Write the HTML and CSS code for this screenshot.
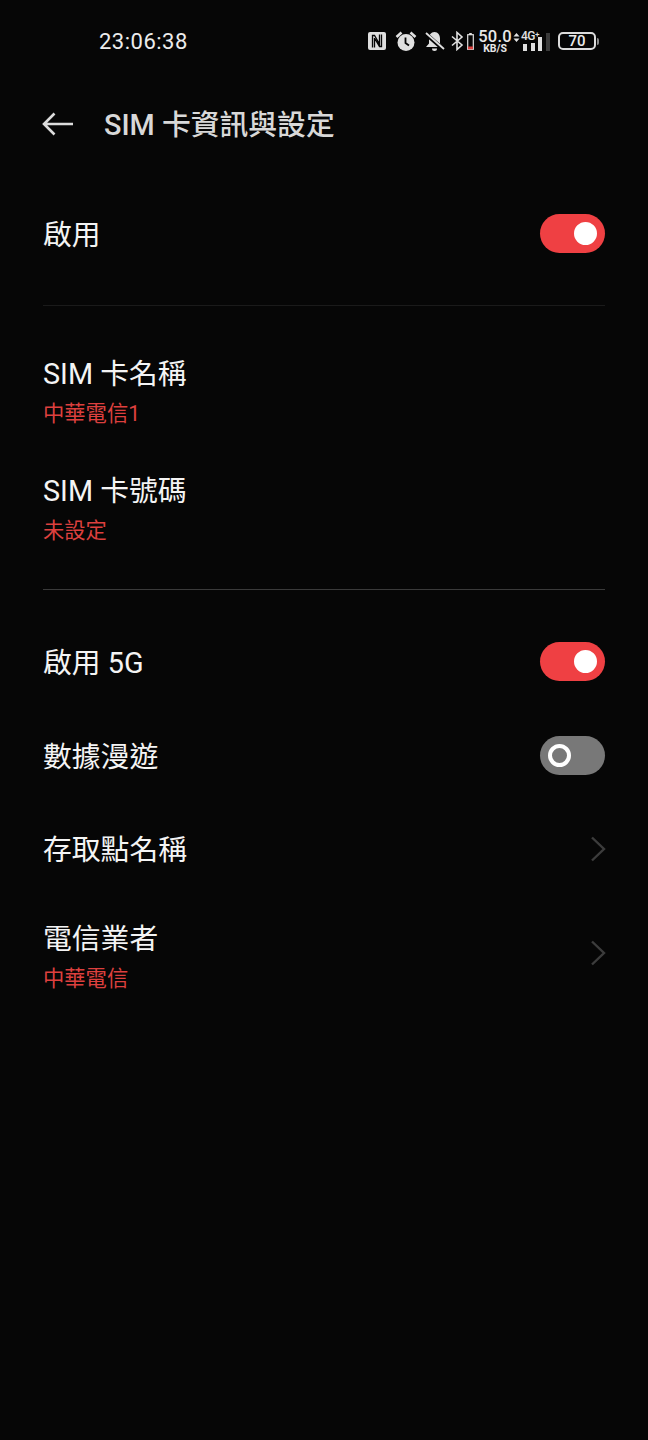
FILE: index.html
```html
<!DOCTYPE html>
<html lang="zh-Hant">
<head>
  <meta charset="UTF-8">
  <meta name="viewport" content="width=device-width, initial-scale=1.0">
  <title>SIM 卡資訊與設定</title>
  <link rel="stylesheet" href="styles.css">
</head>
<body>
  <div class="status-bar">
    <span class="clock">23:06:38</span>
    <div class="status-icons">
      <svg class="ic-nfc" width="20" height="20" viewBox="0 0 20 20">
        <rect x="1" y="1" width="18" height="18" rx="2" fill="#dedede"/>
        <path d="M5.500 16.500V4.500h2L12.500 13V3.500M7.500 7v9.500M14.500 3.500V15.500h-2L8 8" fill="none" stroke="#060606" stroke-width="1.300"/>
      </svg>
      <svg class="ic-alarm" width="22" height="22" viewBox="0 0 22 22">
        <circle cx="11" cy="12.500" r="8.500" fill="#e0e0e0"/>
        <path d="M10.500 7.500v5.500l3.500 2.500" fill="none" stroke="#060606" stroke-width="1.800"/>
        <path d="M1.500 7L6.500 2.500M20.500 7L15.500 2.500" stroke="#e0e0e0" stroke-width="2.600"/>
      </svg>
      <svg class="ic-bell" width="22" height="22" viewBox="0 0 22 22">
        <path d="M10.500 2c-3.600 0-5.500 3-5.500 6.500v5L2 17h17l-3-3.500V8.500C16 5 14.100 2 10.500 2z" fill="#e0e0e0"/>
        <path d="M8 18.500h5a2.500 2.500 0 0 1-5 0z" fill="#e0e0e0"/>
        <path d="M2 4l17 15" stroke="#060606" stroke-width="4"/>
        <path d="M2 3l18 16" stroke="#e0e0e0" stroke-width="1.800"/>
      </svg>
      <svg class="ic-bt" width="13" height="20" viewBox="0 0 13 20">
        <path d="M1 5.500L11 14l-5 4.500V1.500L11 6 1 14.500" fill="none" stroke="#e0e0e0" stroke-width="1.600"/>
      </svg>
      <svg class="ic-bt-batt" width="7" height="17" viewBox="0 0 7 17">
        <rect x="2.200" y="0" width="2.600" height="2" fill="#e0e0e0"/>
        <rect x="0.700" y="1.700" width="5.600" height="14.600" fill="none" stroke="#e0e0e0" stroke-width="1.200"/>
        <rect x="1" y="13.500" width="5" height="2.800" fill="#d9403e"/>
      </svg>
      <div class="speed">
        <span class="speed-num">50.0</span>
        <span class="speed-unit">KB/S</span>
      </div>
      <svg class="ic-arrows" width="7" height="9" viewBox="0 0 7 9">
        <path d="M3.500 0L6.500 3.500h-6zM3.500 9L0.500 5.500h6z" fill="#e0e0e0"/>
      </svg>
      <div class="signal">
        <span class="signal-label">4G<sup>+</sup></span>
        <div class="signal-bars">
          <i class="bar bar-1"></i>
          <i class="bar bar-2"></i>
          <i class="bar bar-3"></i>
          <i class="bar bar-4"></i>
        </div>
      </div>
      <div class="battery"><span>70</span></div>
      <i class="battery-tip"></i>
    </div>
  </div>

  <div class="header">
    <svg class="back" width="32" height="24" viewBox="0 0 32 24">
      <path d="M31 12H2M12.500 1.500L2 12l10.500 10.500" fill="none" stroke="#dcdcdc" stroke-width="2.600"/>
    </svg>
    <h1>SIM 卡資訊與設定</h1>
  </div>

  <div class="section section-first">
    <div class="row">
      <span class="title">啟用</span>
      <div class="switch on"></div>
    </div>
  </div>

  <div class="section section-sim">
    <div class="row-sub">
      <div class="title">SIM 卡名稱</div>
      <div class="sub">中華電信1</div>
    </div>
    <div class="row-sub">
      <div class="title">SIM 卡號碼</div>
      <div class="sub">未設定</div>
    </div>
  </div>

  <div class="section-last">
    <div class="row">
      <span class="title">啟用 5G</span>
      <div class="switch on"></div>
    </div>
    <div class="row">
      <span class="title">數據漫遊</span>
      <div class="switch"></div>
    </div>
    <div class="row">
      <span class="title">存取點名稱</span>
      <svg class="chevron" width="16" height="26" viewBox="0 0 16 26">
        <path d="M2 1.500L14 13 2 24.500" fill="none" stroke="#3c3c3c" stroke-width="2.400"/>
      </svg>
    </div>
    <div class="row row-carrier">
      <div>
        <div class="title">電信業者</div>
        <div class="sub">中華電信</div>
      </div>
      <svg class="chevron chevron-up" width="16" height="26" viewBox="0 0 16 26">
        <path d="M2 1.500L14 13 2 24.500" fill="none" stroke="#3c3c3c" stroke-width="2.400"/>
      </svg>
    </div>
  </div>
</body>
</html>
```

FILE: styles.css
```css
*, *::after {
  box-sizing: border-box;
}

html, body {
  margin: 0;
  padding: 0;
}

body {
  width: 648px;
  height: 1440px;
  background-color: #060606;
  color: #f2f2f2;
  font-family: Roboto, "Noto Sans CJK TC", sans-serif;
  overflow: hidden;
}

.status-bar {
  display: flex;
  align-items: center;
  justify-content: space-between;
  height: 82px;
  padding: 0 49px 0 99px;
}

.clock {
  font-size: 22px;
  letter-spacing: 0.5px;
  color: #ececec;
}

.status-icons {
  display: flex;
  align-items: center;
}

.ic-alarm {
  margin-left: 8px;
}

.ic-bell {
  margin-left: 7px;
}

.ic-bt {
  margin-left: 5px;
}

.ic-bt-batt {
  margin-left: 3px;
}

.speed {
  display: flex;
  flex-direction: column;
  align-items: center;
  width: 32px;
  margin: 2px 0 0 5px;
  color: #e8e8e8;
  font-weight: 500;
}

.speed-num {
  font-size: 16.500px;
  line-height: 14px;
  letter-spacing: 0.2px;
}

.speed-unit {
  font-size: 10.500px;
  line-height: 10px;
  font-weight: 700;
}

.ic-arrows {
  margin-left: 2px;
  margin-top: -7px;
}

.signal {
  position: relative;
  width: 28px;
  height: 20px;
  margin-left: 1px;
}

.signal-label {
  position: absolute;
  top: -1px;
  left: 0;
  font-size: 12px;
  line-height: 12px;
  font-weight: 500;
  letter-spacing: -0.500px;
  color: #e0e0e0;
}

.signal-label sup {
  font-size: 8px;
  line-height: 0;
  vertical-align: 3px;
}

.signal-bars {
  position: absolute;
  left: 2px;
  bottom: 0;
  display: flex;
  align-items: flex-end;
  gap: 3.500px;
}

.bar {
  display: block;
  width: 4px;
  background-color: #e0e0e0;
}

.bar-1 {
  height: 7px;
}

.bar-2 {
  height: 8px;
}

.bar-3 {
  height: 14px;
}

.bar-4 {
  height: 18px;
  background-color: #3a3a3a;
}

.battery {
  display: flex;
  align-items: center;
  justify-content: center;
  width: 38px;
  height: 18px;
  margin-left: 9px;
  border: 2px solid #dcdcdc;
  border-radius: 5px;
  font-size: 15px;
  font-weight: 500;
  color: #ececec;
}

.battery-tip {
  display: block;
  width: 2px;
  height: 7px;
  margin-left: 1px;
  background-color: #8a8a8a;
  border-radius: 0 2px 2px 0;
}

.header {
  display: flex;
  align-items: center;
  height: 84px;
  padding: 0 0 0 42px;
}

.back {
  flex: none;
}

.header h1 {
  margin: -4px 0 0 30px;
  font-size: 28.800px;
  font-weight: 500;
  color: #d8d8d8;
}

.title {
  display: block;
  padding-top: 3px;
  font-size: 28.800px;
  line-height: 40px;
  color: #f4f4f4;
}

.sub {
  font-size: 21.300px;
  line-height: 40px;
  color: #dd403e;
}

.section {
  margin: 0 43px;
}

.section-first {
  padding: 20.500px 0 25px;
  border-bottom: 1px solid #1a1a1a;
}

.section-sim {
  padding: 45px 0 4px;
  border-bottom: 1px solid #3a3a3a;
}

.row-sub {
  height: 117px;
}

.section-last {
  padding: 25px 43px 0;
}

.row {
  display: flex;
  align-items: center;
  justify-content: space-between;
  height: 93.500px;
}

.row-carrier {
  height: 124.500px;
}

.chevron {
  margin-right: -1px;
}

.chevron-up {
  margin-bottom: 9px;
}

.switch {
  position: relative;
  width: 65px;
  height: 39px;
  border-radius: 20px;
  background-color: #787878;
}

.switch::after {
  content: "";
  position: absolute;
  top: 8px;
  left: 8px;
  width: 23px;
  height: 23px;
  border: 4px solid #fff;
  border-radius: 50%;
}

.switch.on {
  background-color: #ef4043;
}

.switch.on::after {
  left: 34px;
  background-color: #fff;
}
```
